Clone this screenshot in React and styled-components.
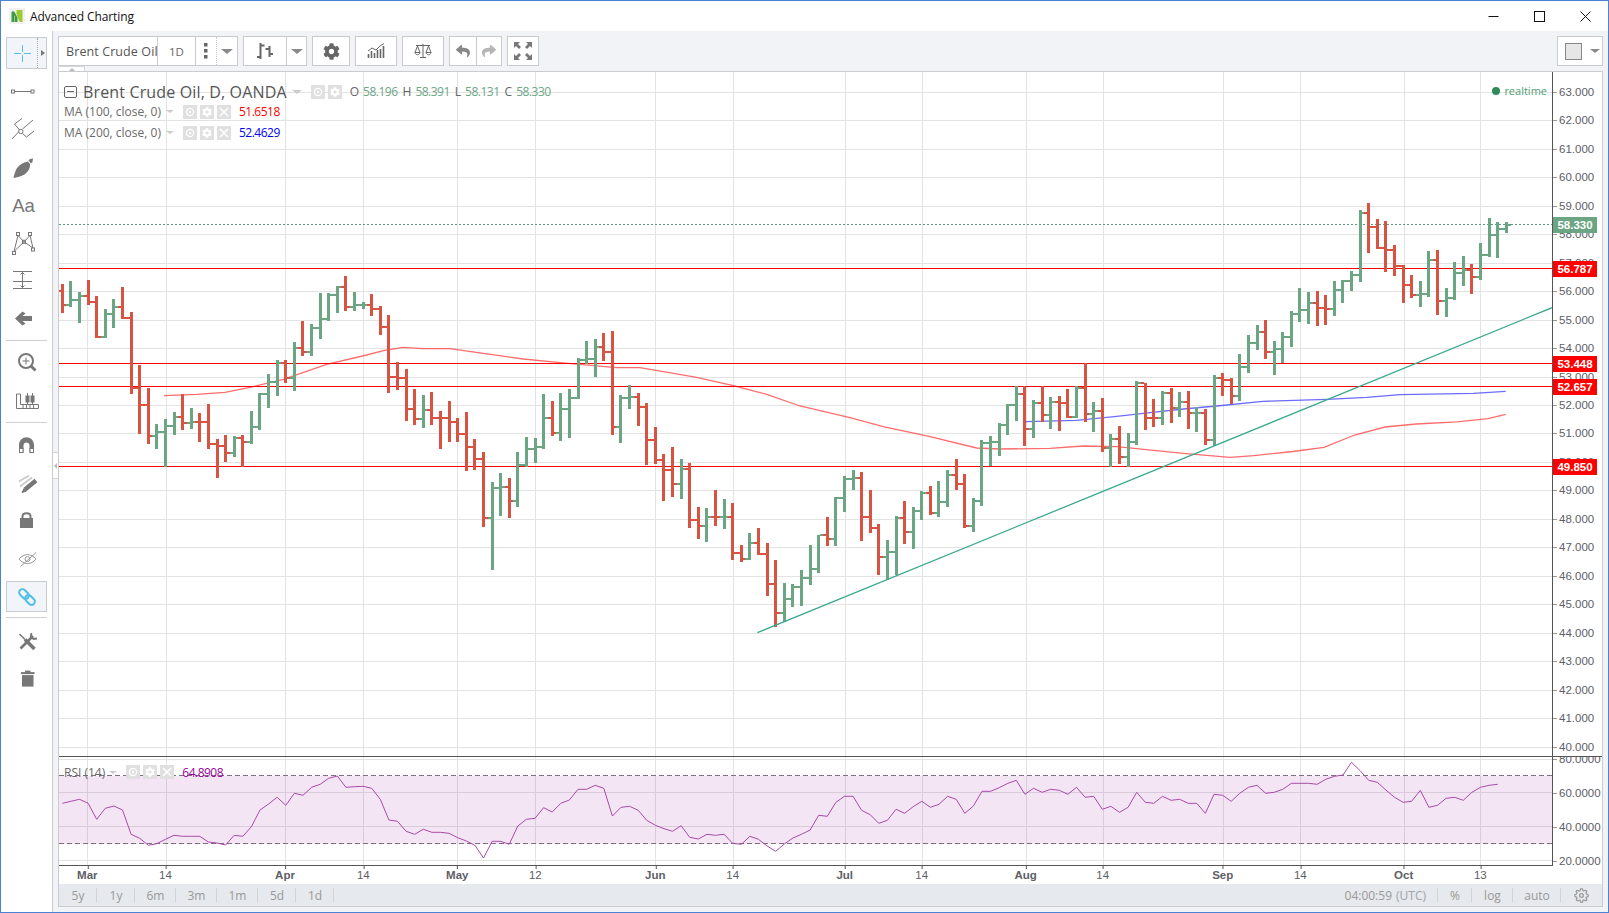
import React from 'react';
import styled, { createGlobalStyle } from 'styled-components';
import { FaCog, FaReply, FaShare } from 'react-icons/fa';
import { FiSettings } from 'react-icons/fi';

const GREEN = '#6ba583';
const RED = '#d75442';
const UI_FONT = '"Open Sans", "Noto Sans", sans-serif';
const NUM_FONT = '"Liberation Sans", Arial, sans-serif';

// chart data is in page pixels: each block was read off at 3x, so y = top + v / 3
// a bar is [colour, high, low, close], its open tick is the previous close
const BAR_BLOCKS = [
  { top: 260, bars: [
    ['r',72,158,136],['g',63,140,121],['g',97,188,109],['r',60,134,127],['r',108,233,230],
    ['g',148,233,161],['g',117,203,142],['r',81,178,175],['r',156,401,383],['r',315,521,436],
    ['r',384,551,529],['g',492,566,517],['g',478,620,497],['g',457,524,470],['r',403,510,490],
    ['g',445,507,485],['r',460,545,487],['r',432,566,552],['r',537,653,559],['r',525,605,580],
    ['g',528,590,535],['r',525,620,545],['g',453,551,500],['g',399,509,403],['g',342,443,365],
    ['g',300,407,310],['r',300,368,355],['g',247,392,265],['r',183,287,276],['g',193,287,205],
    ['g',100,236,178],['g',100,182,105],['g',79,158,82],['r',48,152,142],['g',97,152,135],
    ['g',125,147,135],['r',103,167,147],['r',139,225,201],['r',166,398,352],['r',307,390,354],
    ['r',327,482,448],['r',387,495,478],['g',405,503,451],['r',396,494,475],['r',452,566,475],
  ] },
  { top: 320, bars: [
    ['r',243,365,307],['r',294,366,343],['r',277,452,381],['r',357,449,418],['r',397,620,595],
    ['g',487,749,504],['g',460,587,501],['r',475,593,544],['g',397,560,436],['g',352,440,388],
    ['g',355,428,381],['g',223,388,295],['r',243,348,340],['g',220,362,268],['g',208,353,235],
    ['g',115,238,121],['g',64,132,118],['g',58,170,82],['r',40,123,97],['r',33,345,322],
    ['g',226,368,235],['g',196,267,232],['r',220,318,262],['r',250,434,361],['r',322,433,420],
    ['r',403,542,451],['r',382,530,492],['g',418,536,448],['r',430,623,601],['r',562,656,619],
    ['g',565,665,592],['r',511,617,592],['g',538,626,592],['r',550,719,699],['r',676,725,717],
    ['g',640,721,670],['r',625,705,703],['r',670,827,792],['r',721,920,880],['g',790,905,838],
    ['g',793,862,802],['g',751,857,775],['g',676,795,748],['g',644,760,646],['r',592,677,658],
    ['g',530,677,535],['g',469,575,478],
  ] },
  { top: 440, bars: [
    ['g',90,150,115],['r',97,302,232],['r',150,278,263],['r',252,405,352],['g',300,420,335],
    ['g',228,405,234],['r',183,312,277],['g',201,327,213],['g',153,240,158],['r',138,225,218],
    ['g',123,232,186],['g',90,201,105],['r',57,150,131],['r',102,265,258],['g',175,276,184],
  ] },
  { top: 340, bars: [
    ['g',300,498,310],['g',288,378,307],['g',250,348,255],['g',192,284,196],['g',138,243,162],
    ['r',138,318,268],['g',180,293,190],['r',138,245,226],['g',171,267,187],['r',168,272,190],
    ['r',147,234,230],['g',138,235,145],['r',70,245,223],['g',186,275,212],['r',174,335,323],
    ['g',283,380,298],['r',258,372,352],['g',280,382,307],['g',123,315,130],['r',130,269,235],
    ['r',178,261,235],['g',153,254,160],['r',145,248,205],['g',157,232,187],['r',153,267,218],
    ['g',202,275,218],['r',208,315,300],['g',105,318,114],['r',100,167,120],['r',114,191,169],
    ['g',42,182,80],
  ] },
  { top: 190, bars: [
    ['g',436,548,458],['g',405,480,425],['r',390,507,487],['g',453,555,478],['g',427,520,442],
    ['g',363,470,373],['g',295,395,360],['g',306,402,340],['r',303,408,355],['r',315,404,358],
    ['g',273,377,300],['g',270,338,272],['g',243,302,255],['g',60,275,68],['r',40,188,112],
    ['r',87,178,175],['r',93,245,180],['r',165,257,228],['r',226,338,286],['r',255,323,315],
    ['g',273,350,313],['g',183,322,210],['r',180,375,333],['g',295,380,325],['g',217,330,250],
    ['g',198,287,240],['r',222,312,262],['g',160,270,195],['g',85,200,136],['g',97,203,117],
    ['g',97,128,104],
  ] },
];

const barX = (i) => 62.3 + i * 8.595;

const BARS = (() => {
  const out = [];
  let prevClose = 291;
  BAR_BLOCKS.forEach(({ top, bars }) => {
    bars.forEach(([c, hi, lo, cl]) => {
      const close = top + cl / 3;
      out.push({ x: barX(out.length), color: c === 'r' ? RED : GREEN, high: top + hi / 3, low: top + lo / 3, open: prevClose, close });
      prevClose = close;
    });
  });
  return out;
})();

const RSI_BLOCKS = [
  { top: 740, v: [190,184,178,190,238,205,198,210,283,295,316,311,298,286,289,289,289,306,309,315,286,289,260,210,192,172,196,160,166,142,133,115,108,142,140,139,145,178,240,244] },
  { top: 756, v: [226,235,220,229,229,232,245,255,268,306,256,256,265,210,190,187,155,168,142,132,100,100,88,97,180,154,151,163,193,208,218,226,209,244,249,235,238,235,262,265,241,250,270,286,264,246,235,222,178,181,139,121] },
  { top: 756, v: [121,163,176,202,193,160,172,152,136,154,145,121,130,172,150,106,106,95,82,73,115,97,109,100,103,115,94,124,121,160,151,169,154,109,139,142,121,133,130,142,142,172,115,118,136,112,94,88,112,109,100,82,82] },
  { top: 740, v: [130,133,118,109,105,67,92,121,127,150,172,187,184,151,202,196,175,172,181,157,142,136,133] },
];

const RSI_POINTS = RSI_BLOCKS.flatMap(({ top, v }) => v.map((z) => top + z / 3)).map((y, i) => `${barX(i).toFixed(1)},${y.toFixed(1)}`).join(' ');

const MA100 = '164,395.7 196.7,394.3 225,392.3 250,387.3 283.3,379.3 326.7,364.3 366.7,355 383.3,350.7 403.3,347.3 423.3,348.7 450,348.7 483.3,353.3 523.3,359 560,362.7 616.7,367.7 640,367.7 696.7,377.3 733.3,385.7 766.7,394.3 800,406 850,417.7 883.3,426.7 930,436.7 976.7,448 1000,449 1050,448.3 1083.3,446 1116.7,446.7 1183.3,453.3 1230,457.3 1254,455.6 1293,451.5 1324,447.4 1354.6,435 1385,427 1416,424 1457,421.8 1488,418.7 1505.7,414.3';
const MA200 = '1025.7,421.7 1076.7,420.3 1116.7,416.3 1150,412.7 1183.3,409 1216.7,406 1263,401.3 1326.7,399.3 1366.7,397.3 1400,394.7 1473.3,393.3 1505.7,391.3';

const LEVELS = [
  { y: 268.5, label: '56.787' },
  { y: 363.5, label: '53.448' },
  { y: 386.5, label: '52.657' },
  { y: 466.5, label: '49.850' },
];

const priceY = (p) => 91.7 + (63 - p) * 28.48;
const PRICES = Array.from({ length: 24 }, (_, i) => 63 - i);

const RSI_GRID = [
  { y: 759, label: '80.0000' },
  { y: 792.5, label: '60.0000' },
  { y: 826.5, label: '40.0000' },
  { y: 860.5, label: '20.0000' },
];

const TIME_TICKS = [
  { x: 87.3, label: 'Mar', bold: true }, { x: 165.5, label: '14' },
  { x: 285, label: 'Apr', bold: true }, { x: 363.3, label: '14' },
  { x: 457.3, label: 'May', bold: true }, { x: 535.3, label: '12' },
  { x: 655.3, label: 'Jun', bold: true }, { x: 732.7, label: '14' },
  { x: 844.7, label: 'Jul', bold: true }, { x: 921.7, label: '14' },
  { x: 1025.7, label: 'Aug', bold: true }, { x: 1102.7, label: '14' },
  { x: 1222.7, label: 'Sep', bold: true }, { x: 1300.3, label: '14' },
  { x: 1403.7, label: 'Oct', bold: true }, { x: 1480.3, label: '13' },
];

const RANGES = [['5y', 38], ['1y', 38], ['6m', 41], ['3m', 41], ['1m', 41], ['5d', 38], ['1d', 38]];

const GlobalStyle = createGlobalStyle`
  html, body { margin: 0; padding: 0; background: #fff; }
  #root { width: 1609px; height: 913px; overflow: hidden; }
  * { box-sizing: border-box; }
`;

const Window = styled.div`
  width: 1609px;
  height: 913px;
  border: 1px solid #4a83d6;
  display: flex;
  flex-direction: column;
  background: #fff;
  font-family: ${UI_FONT};
`;

const TitleBar = styled.div`
  height: 30px;
  display: flex;
  align-items: center;
  flex-shrink: 0;
`;

const Logo = styled.svg`
  width: 16px;
  height: 16px;
  margin-left: 8px;
`;

const AppTitle = styled.div`
  margin-left: 5px;
  font-size: 12px;
  letter-spacing: -0.1px;
  color: #111;
  flex: 1;
`;

const WinButton = styled.div`
  width: 46px;
  height: 30px;
  display: flex;
  align-items: center;
  justify-content: center;
`;

const Body = styled.div`
  flex: 1;
  display: flex;
  min-height: 0;
`;

const LeftTools = styled.div`
  width: 52px;
  flex-shrink: 0;
  border-right: 1px solid #c9cbcf;
  padding-top: 6px;
  display: flex;
  flex-direction: column;
  background: #fff;
`;

const CrossButton = styled.div`
  width: 41px;
  height: 32px;
  margin: 0 0 3px 5px;
  border: 1px solid #c9cbcf;
  background: #f1f5f9;
  display: flex;
  align-items: center;
  flex-shrink: 0;
`;

const CrossPart = styled.div`
  width: 31px;
  height: 100%;
  display: flex;
  align-items: center;
  justify-content: center;
  border-right: 1px dotted #aaa;
`;

const SideArrow = styled.span`
  margin-left: 3px;
  border-left: 4px solid #777;
  border-top: 3px solid transparent;
  border-bottom: 3px solid transparent;
`;

const ToolSlot = styled.div`
  height: 38px;
  flex-shrink: 0;
  display: flex;
  align-items: center;
`;

const ToolSvg = styled.svg`
  width: 51px;
  height: 38px;
  display: block;
`;

const ToolText = styled.div`
  width: 45px;
  text-align: center;
  font-family: ${NUM_FONT};
  font-size: 18.5px;
  line-height: 19px;
  color: #777;
`;

const ToolDivider = styled.div`
  height: 1px;
  margin: ${(p) => p.$space}px 5px;
  background: #cfcfcf;
  flex-shrink: 0;
`;

const ActiveTool = styled.div`
  width: 41px;
  height: 31px;
  margin: 3px 0 0 5px;
  border: 1px solid #c9cbcf;
  background: #f1f5f9;
  display: flex;
  align-items: center;
  justify-content: center;
  flex-shrink: 0;
`;

const MainColumn = styled.div`
  flex: 1;
  min-width: 0;
  display: flex;
  flex-direction: column;
  background: #f1f3f6;
  position: relative;
`;

const CollapseHandle = styled.div`
  position: absolute;
  left: 0;
  top: 421px;
  width: 5px;
  height: 27px;
  background: #fff;
  border-top: 1px solid #d5d5d5;
  border-bottom: 1px solid #d5d5d5;
  display: flex;
  align-items: center;
  &::after {
    content: '';
    border-right: 3px solid #bbb;
    border-top: 3px solid transparent;
    border-bottom: 3px solid transparent;
    margin-left: 1px;
  }
`;

const Toolbar = styled.div`
  height: 40px;
  padding: 5px;
  display: flex;
  gap: 5px;
  position: relative;
  flex-shrink: 0;
`;

const PaneTab = styled.div`
  position: absolute;
  left: 5px;
  bottom: 0;
  width: 27px;
  height: 5px;
  background: #fff;
  border: 1px solid #d5d7da;
  border-bottom: none;
  display: flex;
  justify-content: center;
  align-items: center;
  &::after {
    content: '';
    border-bottom: 3px solid #bbb;
    border-left: 3px solid transparent;
    border-right: 3px solid transparent;
  }
`;

const BtnGroup = styled.div`
  height: 30px;
  display: flex;
  background: #fff;
  border: 1px solid #c9cbcf;
  margin-left: ${(p) => (p.$push ? 'auto' : '0')};
`;

const Btn = styled.div`
  width: ${(p) => p.$w}px;
  display: flex;
  align-items: center;
  justify-content: center;
  flex-shrink: 0;
  color: ${(p) => p.$color || '#666'};
  font-size: 11.5px;
  border-left: ${(p) => (p.$sep ? `1px ${p.$sep} #c9cbcf` : 'none')};
`;

const SymbolBtn = styled(Btn)`
  justify-content: flex-start;
  padding-left: 7px;
  overflow: hidden;
  white-space: nowrap;
  font-size: 12.5px;
  letter-spacing: 0.1px;
  color: #555;
`;

const Caret = styled.span`
  display: inline-block;
  margin: ${(p) => p.$margin || '0'};
  border-top: ${(p) => p.$size || 5}px solid ${(p) => p.$color || '#8a8a8a'};
  border-left: ${(p) => (p.$size || 5) + 1}px solid transparent;
  border-right: ${(p) => (p.$size || 5) + 1}px solid transparent;
`;

const Swatch = styled.div`
  width: 17px;
  height: 17px;
  background: #e6e6e6;
  border: 1px solid #888;
`;

const ChartFrame = styled.div`
  flex: 1;
  min-height: 0;
  margin: 0 5px 5px 5px;
  border: 1px solid #c9cbcf;
  background: #fff;
  display: flex;
  flex-direction: column;
`;

const Pane = styled.div`
  height: ${(p) => p.$h}px;
  display: flex;
  flex-shrink: 0;
  border-bottom: ${(p) => (p.$line ? '1px solid #555' : 'none')};
`;

const Plot = styled.div`
  width: 1493px;
  position: relative;
  flex-shrink: 0;
  overflow: hidden;
  border-bottom: ${(p) => (p.$line ? '1px solid #555' : 'none')};
`;

const ChartSvg = styled.svg`
  display: block;
  width: 100%;
  height: 100%;
`;

const PriceAxis = styled.div`
  flex: 1;
  position: relative;
  overflow: hidden;
  border-left: 1px solid #555;
`;

const PriceLabel = styled.div`
  position: absolute;
  left: 6px;
  font-family: ${NUM_FONT};
  font-size: 11.5px;
  line-height: 14px;
  color: #5d6066;
  transform: translateY(-50%);
  &::before {
    content: '';
    position: absolute;
    left: -6px;
    top: 7px;
    width: 4px;
    height: 1px;
    background: #999;
  }
`;

const PriceTag = styled.div`
  position: absolute;
  left: 0;
  width: 44px;
  height: 16px;
  transform: translateY(-50%);
  background: ${(p) => p.$bg};
  color: #fff;
  font-family: ${NUM_FONT};
  font-size: 11.5px;
  font-weight: bold;
  line-height: 16px;
  text-align: center;
`;

const Legend = styled.div`
  position: absolute;
  left: 5px;
  top: ${(p) => p.$top}px;
  display: flex;
  flex-direction: column;
`;

const LegendRow = styled.div`
  height: ${(p) => p.$h || 21}px;
  display: flex;
  align-items: center;
  white-space: nowrap;
  color: #6a6a6a;
  font-size: 12px;
`;

const CollapseBox = styled.div`
  width: 13px;
  height: 12px;
  margin-right: 6px;
  border: 1px solid #666;
  border-radius: 2px;
  display: flex;
  align-items: center;
  justify-content: center;
  &::after {
    content: '';
    width: 7px;
    height: 1px;
    background: #666;
  }
`;

const SymbolTitle = styled.span`
  font-size: 16px;
  letter-spacing: 0.15px;
  color: #555;
`;

const LegendBtn = styled.span`
  width: 14px;
  height: 14px;
  margin-right: 3px;
  background: #e0e0e0;
  display: flex;
  align-items: center;
  justify-content: center;
  color: #fff;
`;

const LegendValue = styled.span`
  color: ${(p) => p.$color};
  font-size: 12px;
  letter-spacing: -0.5px;
  margin-left: ${(p) => p.$gap || 0}px;
`;

const Ohlc = styled.span`
  color: #666;
  font-size: 12px;
  margin-left: 5px;
  margin-right: 4px;
`;

const Realtime = styled.div`
  position: absolute;
  right: 5px;
  top: 11px;
  display: flex;
  align-items: center;
  gap: 4px;
  font-size: 11px;
  color: #4f9e74;
  &::before {
    content: '';
    width: 8px;
    height: 8px;
    border-radius: 50%;
    background: #2e8b57;
  }
`;

const TimeAxis = styled.div`
  height: 18px;
  position: relative;
  flex-shrink: 0;
`;

const TimeLabel = styled.div`
  position: absolute;
  top: 2px;
  transform: translateX(-50%);
  font-family: ${NUM_FONT};
  font-size: 11.5px;
  line-height: 14px;
  font-weight: ${(p) => (p.$bold ? 'bold' : 'normal')};
  color: #5d6066;
  &::before {
    content: '';
    position: absolute;
    left: 50%;
    top: -2px;
    width: 1px;
    height: 3px;
    background: #555;
  }
`;

const BottomBar = styled.div`
  flex: 1;
  display: flex;
  background: #e6e9ee;
  color: #999;
  font-size: 12px;
`;

const BarItem = styled.div`
  width: ${(p) => (p.$w ? `${p.$w}px` : 'auto')};
  display: flex;
  align-items: center;
  justify-content: center;
  position: relative;
  padding-right: ${(p) => p.$pad || 0}px;
  &::after {
    content: '';
    display: ${(p) => (p.$end ? 'none' : 'block')};
    position: absolute;
    right: 0;
    top: 4px;
    bottom: 4px;
    width: 1px;
    background: #d0d3d8;
  }
`;

const BarRight = styled.div`
  margin-left: auto;
  display: flex;
`;

const Utc = styled.span`
  color: #a0a3a8;
  margin-left: 4px;
`;

function EyeGlyph() {
  return (
    <svg width="10" height="10" viewBox="0 0 10 10">
      <circle cx="5" cy="5" r="3.6" fill="none" stroke="#fff" strokeWidth="1.2" />
      <circle cx="5" cy="5" r="1.2" fill="#fff" />
    </svg>
  );
}

function CloseGlyph() {
  return (
    <svg width="10" height="10" viewBox="0 0 10 10">
      <path d="M1 1L9 9M9 1L1 9" stroke="#fff" strokeWidth="1.6" />
    </svg>
  );
}

function LegendButtons({ close }) {
  return (
    <>
      <LegendBtn><EyeGlyph /></LegendBtn>
      <LegendBtn><FaCog size={10} /></LegendBtn>
      {close && <LegendBtn><CloseGlyph /></LegendBtn>}
    </>
  );
}

// tool icons are drawn in page-like coordinates, y is where the 38px slot starts in them
function ToolIcon({ y, children }) {
  return (
    <ToolSlot>
      <ToolSvg viewBox={`0 ${y} 51 38`} fill="none" stroke="#777">
        {children}
      </ToolSvg>
    </ToolSlot>
  );
}

function LeftToolbar() {
  return (
    <LeftTools>
      <CrossButton>
        <CrossPart>
          <svg width="17" height="17" viewBox="0 0 17 17" stroke="#59bde8">
            <path d="M0 8.5H7M10 8.5H17M8.5 0V7M8.5 10V17" />
          </svg>
        </CrossPart>
        <SideArrow />
      </CrossButton>
      <ToolIcon y={72}>
        <path d="M13.5 91.5H30" />
        <rect x="10.5" y="90" width="3" height="3" />
        <rect x="30" y="90" width="3" height="3" />
      </ToolIcon>
      <ToolIcon y={110}>
        <path d="M11 139L18 131.5M21.5 129L32 120M13.5 124L18.5 130M21.5 133.5L25.5 137M21 118.5L13.5 124M25.5 137L33 131" />
        <circle cx="19.8" cy="131.5" r="2.2" />
      </ToolIcon>
      <ToolIcon y={148}>
        <path d="M12.5 178C14 172 15 168 19 165C22 162.5 25 162 27 161.5L29 164C29.5 168 27 172 23.5 174.5C20 176.5 16 177.5 12.5 178Z" fill="#777" stroke="none" />
        <path d="M27.5 160.5L29 159L32 158.5L31.5 162L30 163.5Z" fill="#777" stroke="none" />
      </ToolIcon>
      <ToolSlot><ToolText>Aa</ToolText></ToolSlot>
      <ToolIcon y={224}>
        <path d="M13 251.5L17 235.5L23 241.8L29 235.5L32 248L23 241.8L13 251.5" />
        <rect x="11.5" y="251.5" width="3" height="3" />
        <rect x="15.5" y="232.5" width="3" height="3" />
        <rect x="27.5" y="232.5" width="3" height="3" />
        <rect x="30.5" y="248" width="3" height="3" />
        <rect x="21.5" y="240.3" width="3" height="3" />
      </ToolIcon>
      <ToolIcon y={254}>
        <path d="M12 263.5H31M12 273.5H31M12 280.5H31M21.5 264V280M19.5 266.5L21.5 264.5L23.5 266.5M19.5 277.5L21.5 279.5L23.5 277.5" />
      </ToolIcon>
      <ToolIcon y={288.4}>
        <path d="M14 307L21.5 300L24.5 302L21.5 304.5H31V309.5H21.5L24.5 312L21.5 314Z" fill="#777" stroke="none" />
      </ToolIcon>
      <ToolDivider $space={2} />
      <ToolIcon y={329}>
        <circle cx="25" cy="347" r="7" strokeWidth="2" />
        <path d="M21.5 347H28.5M25 343.5V350.5" />
        <path d="M30 352L34.5 356.5" strokeWidth="3" />
      </ToolIcon>
      <ToolIcon y={364}>
        <path d="M15.5 377V391.5H37.5V387.5H19.5V377ZM22 388V391M25.5 388V391M29 388V391M32.5 388V391" />
        <path d="M26.5 376V387M31.5 376V387" />
        <rect x="25" y="379" width="3" height="6" fill="#777" />
        <rect x="30" y="379" width="3" height="6" fill="#777" />
      </ToolIcon>
      <ToolDivider $space={3} />
      <ToolIcon y={406.5}>
        <path d="M18 433V426C18 415 33 415 33 426V433H28.5V426C28.5 422 22.5 422 22.5 426V433Z" fill="#777" stroke="none" />
        <rect x="18.5" y="429" width="3.5" height="4" fill="#fff" stroke="#777" />
        <rect x="29" y="429" width="3.5" height="4" fill="#fff" stroke="#777" />
      </ToolIcon>
      <ToolIcon y={441.5}>
        <path d="M18 459L28 453M19 464L31 455" stroke="#ccc" strokeWidth="2" />
        <path d="M24 467L35 458" strokeWidth="4.5" />
        <path d="M21 470L23 466L25.5 468.5Z" fill="#777" />
      </ToolIcon>
      <ToolIcon y={477.5}>
        <rect x="19" y="493.5" width="13" height="10" fill="#777" stroke="none" />
        <path d="M21.5 494V492C21.5 487.5 29.5 487.5 29.5 492V494" strokeWidth="2" />
      </ToolIcon>
      <ToolIcon y={513.4}>
        <path d="M18 532.5C23 526.5 30 526.5 35 532.5C30 538.5 23 538.5 18 532.5Z" stroke="#999" />
        <circle cx="26.5" cy="532.5" r="2.5" stroke="#999" />
        <path d="M19.5 540L35 526" stroke="#999" />
      </ToolIcon>
      <ActiveTool>
        <svg width="20" height="20" viewBox="0 0 20 20" fill="none" stroke="#4fbfe8" strokeWidth="2">
          <rect x="1.5" y="3.75" width="11" height="6.5" rx="3.2" transform="rotate(45 7 7)" />
          <rect x="7.5" y="9.75" width="11" height="6.5" rx="3.2" transform="rotate(45 13 13)" />
        </svg>
      </ActiveTool>
      <ToolDivider $space={5} />
      <ToolIcon y={590.5}>
        <path d="M18.5 601.5L24 607" strokeWidth="1.5" />
        <path d="M24 607L33.5 616.5" strokeWidth="3.5" />
        <path d="M32 603.5L19.5 616" strokeWidth="2.6" />
        <path d="M30.5 600.5L29.8 604L32.5 606.5L36 606" strokeWidth="1.8" />
      </ToolIcon>
      <ToolIcon y={626.4}>
        <rect x="21" y="640.5" width="11.5" height="11.5" fill="#777" stroke="none" />
        <rect x="20" y="637.5" width="13.5" height="2" fill="#777" stroke="none" />
        <rect x="24" y="636" width="5.5" height="2" fill="#777" stroke="none" />
      </ToolIcon>
    </LeftTools>
  );
}

function TopToolbar() {
  return (
    <Toolbar>
      <BtnGroup>
        <SymbolBtn $w={98}>Brent Crude Oil</SymbolBtn>
        <Btn $w={38} $sep="solid">1D</Btn>
        <Btn $w={21} $sep="solid">
          <svg width="4" height="16" viewBox="0 0 4 16" fill="#666">
            <rect x="0" y="0" width="3.5" height="3.5" />
            <rect x="0" y="6" width="3.5" height="3.5" />
            <rect x="0" y="12" width="3.5" height="3.5" />
          </svg>
        </Btn>
        <Btn $w={21} $sep="dotted"><Caret /></Btn>
      </BtnGroup>
      <BtnGroup>
        <Btn $w={42}>
          <svg width="18" height="18" viewBox="0 0 18 18" fill="none" stroke="#666" strokeWidth="2">
            <path d="M4.5 1V17M4.5 15H1M4.5 3.5H8.5M13.5 4V15M13.5 7H9.5M13.5 12H17" />
          </svg>
        </Btn>
        <Btn $w={20} $sep="solid"><Caret /></Btn>
      </BtnGroup>
      <BtnGroup>
        <Btn $w={36}><FaCog size={17} /></Btn>
      </BtnGroup>
      <BtnGroup>
        <Btn $w={40}>
          <svg width="18" height="16" viewBox="0 0 18 16" fill="none" stroke="#666">
            <path d="M1 8L5 5L9 7L13 3L17 0.5" />
            <path d="M1.5 15V11M4.5 15V8M7.5 15V10M10.5 15V7M13.5 15V6M16.5 15V3" strokeWidth="1.6" />
          </svg>
        </Btn>
      </BtnGroup>
      <BtnGroup>
        <Btn $w={40}>
          <svg width="18" height="16" viewBox="0 0 18 16" fill="none" stroke="#666">
            <path d="M2 2.5H16M9 1V14M6 14.5H12" />
            <path d="M3.5 3L1 9.5H6L3.5 3ZM14.5 3L12 9.5H17L14.5 3Z" />
            <path d="M1 9.5C1.5 12.5 5.5 12.5 6 9.5M12 9.5C12.5 12.5 16.5 12.5 17 9.5" />
          </svg>
        </Btn>
      </BtnGroup>
      <BtnGroup>
        <Btn $w={26} $color="#888"><FaReply size={14} /></Btn>
        <Btn $w={25} $sep="solid" $color="#b5b5b5"><FaShare size={14} /></Btn>
      </BtnGroup>
      <BtnGroup>
        <Btn $w={30}>
          <svg width="18" height="18" viewBox="0 0 18 18" fill="#777">
            <path d="M0 0H6L4 2L7 5L5 7L2 4L0 6ZM18 0V6L16 4L13 7L11 5L14 2L12 0ZM0 18V12L2 14L5 11L7 13L4 16L6 18ZM18 18H12L14 16L11 13L13 11L16 14L18 12Z" />
          </svg>
        </Btn>
      </BtnGroup>
      <BtnGroup $push>
        <Btn $w={30}><Swatch /></Btn>
        <Btn $w={14}><Caret $size={4} /></Btn>
      </BtnGroup>
      <PaneTab />
    </Toolbar>
  );
}

function BarShape({ bar }) {
  const left = Math.round(bar.x - 1.5);
  return (
    <g fill={bar.color}>
      <rect x={left} y={bar.high} width="3" height={bar.low - bar.high} />
      <rect x={left - 3} y={Math.round(bar.open) - 1} width="3" height="2" />
      <rect x={left + 3} y={Math.round(bar.close) - 1} width="3" height="2" />
    </g>
  );
}

function MainChart() {
  return (
    <ChartSvg viewBox="59 72 1493 684" shapeRendering="crispEdges">
      <g stroke="#e3e3e3">
        {PRICES.map((p) => <path key={p} d={`M59 ${Math.round(priceY(p)) + 0.5}H1552`} />)}
        {TIME_TICKS.map((t) => <path key={t.x} d={`M${Math.round(t.x) + 0.5} 72V756`} />)}
      </g>
      <path d="M59 224.5H1552" stroke="#5c9c7c" strokeDasharray="2 2" />
      <g shapeRendering="auto" fill="none" strokeWidth="1.3" strokeOpacity="0.75">
        <polyline points={MA100} stroke="#ff3b3b" />
        <polyline points={MA200} stroke="#3b3bff" />
      </g>
      {LEVELS.map((l) => <path key={l.label} d={`M59 ${l.y}H1552`} stroke="#ff0000" />)}
      {BARS.map((b) => <BarShape key={b.x} bar={b} />)}
      <path d="M757.3 632.7L1552 307.7" stroke="#38a88e" strokeWidth="1.3" shapeRendering="auto" />
    </ChartSvg>
  );
}

function RsiChart() {
  return (
    <ChartSvg viewBox="59 757 1493 108" shapeRendering="crispEdges">
      <g stroke="#e3e3e3">
        {RSI_GRID.map((g) => <path key={g.y} d={`M59 ${Math.floor(g.y) + 0.5}H1552`} />)}
        {TIME_TICKS.map((t) => <path key={t.x} d={`M${Math.round(t.x) + 0.5} 757V865`} />)}
      </g>
      <rect x="59" y="776" width="1493" height="68" fill="#900090" fillOpacity="0.1" />
      <path d="M59 775.5H1552M59 843.5H1552" stroke="#7d6f80" strokeDasharray="5 3" />
      <polyline points={RSI_POINTS} fill="none" stroke="#a94aa9" strokeWidth="1" shapeRendering="auto" />
    </ChartSvg>
  );
}

export default function App() {
  return (
    <Window>
      <GlobalStyle />
      <TitleBar>
        <Logo viewBox="0 0 16 16">
          <rect width="16" height="16" fill="#f0f0f0" />
          <path d="M2.5 14V5C2.5 3 4.5 2.5 5.5 4L8.5 9.5V14H5.5V8L5 7.5V14Z" fill="#3d9a3d" />
          <path d="M7.5 2H13.5V14H11.5C10 14 9.5 11.5 9 10L7.5 6Z" fill="#9ccb2e" />
        </Logo>
        <AppTitle>Advanced Charting</AppTitle>
        <WinButton>
          <svg width="11" height="11" viewBox="0 0 11 11" stroke="#111"><path d="M0.5 5.5H10.5" /></svg>
        </WinButton>
        <WinButton>
          <svg width="11" height="11" viewBox="0 0 11 11" fill="none" stroke="#111"><rect x="0.5" y="0.5" width="10" height="10" /></svg>
        </WinButton>
        <WinButton>
          <svg width="11" height="11" viewBox="0 0 11 11" stroke="#111"><path d="M0.5 0.5L10.5 10.5M10.5 0.5L0.5 10.5" /></svg>
        </WinButton>
      </TitleBar>
      <Body>
        <LeftToolbar />
        <MainColumn>
          <CollapseHandle />
          <TopToolbar />
          <ChartFrame>
            <Pane $h={685} $line>
              <Plot>
                <MainChart />
                <Legend $top={10}>
                  <LegendRow $h={19}>
                    <CollapseBox />
                    <SymbolTitle>Brent Crude Oil, D, OANDA</SymbolTitle>
                    <Caret $size={4} $color="#ccc" $margin="0 9px 0 5px" />
                    <LegendButtons />
                    <Ohlc>O</Ohlc><LegendValue $color={GREEN}>58.196</LegendValue>
                    <Ohlc>H</Ohlc><LegendValue $color={GREEN}>58.391</LegendValue>
                    <Ohlc>L</Ohlc><LegendValue $color={GREEN}>58.131</LegendValue>
                    <Ohlc>C</Ohlc><LegendValue $color={GREEN}>58.330</LegendValue>
                  </LegendRow>
                  <LegendRow>
                    MA (100, close, 0)
                    <Caret $size={3} $color="#ccc" $margin="0 9px 0 5px" />
                    <LegendButtons close />
                    <LegendValue $color="#ff0000" $gap={5}>51.6518</LegendValue>
                  </LegendRow>
                  <LegendRow>
                    MA (200, close, 0)
                    <Caret $size={3} $color="#ccc" $margin="0 9px 0 5px" />
                    <LegendButtons close />
                    <LegendValue $color="#0000ff" $gap={5}>52.4629</LegendValue>
                  </LegendRow>
                </Legend>
                <Realtime>realtime</Realtime>
              </Plot>
              <PriceAxis>
                {PRICES.map((p) => (
                  <PriceLabel key={p} style={{ top: priceY(p) - 72 }}>{p.toFixed(3)}</PriceLabel>
                ))}
                <PriceTag $bg={GREEN} style={{ top: 225 - 72 }}>58.330</PriceTag>
                {LEVELS.map((l) => (
                  <PriceTag key={l.label} $bg="#ff0000" style={{ top: l.y - 72 }}>{l.label}</PriceTag>
                ))}
              </PriceAxis>
            </Pane>
            <Pane $h={109}>
              <Plot $line>
                <RsiChart />
                <Legend $top={5}>
                  <LegendRow $h={20}>
                    RSI (14)
                    <Caret $size={3} $color="#ccc" $margin="0 9px 0 4px" />
                    <LegendButtons close />
                    <LegendValue $color="#990099" $gap={5}>64.8908</LegendValue>
                  </LegendRow>
                </Legend>
              </Plot>
              <PriceAxis>
                {RSI_GRID.map((g) => (
                  <PriceLabel key={g.y} style={{ top: g.y - 757 }}>{g.label}</PriceLabel>
                ))}
              </PriceAxis>
            </Pane>
            <TimeAxis>
              {TIME_TICKS.map((t) => (
                <TimeLabel key={t.x} $bold={t.bold} style={{ left: t.x - 59 }}>{t.label}</TimeLabel>
              ))}
            </TimeAxis>
            <BottomBar>
              {RANGES.map(([label, w]) => <BarItem key={label} $w={w}>{label}</BarItem>)}
              <BarRight>
                <BarItem $pad={12}>04:00:59<Utc>(UTC)</Utc></BarItem>
                <BarItem $w={34}>%</BarItem>
                <BarItem $w={41}>log</BarItem>
                <BarItem $w={48}>auto</BarItem>
                <BarItem $w={41} $end><FiSettings size={15} /></BarItem>
              </BarRight>
            </BottomBar>
          </ChartFrame>
        </MainColumn>
      </Body>
    </Window>
  );
}
